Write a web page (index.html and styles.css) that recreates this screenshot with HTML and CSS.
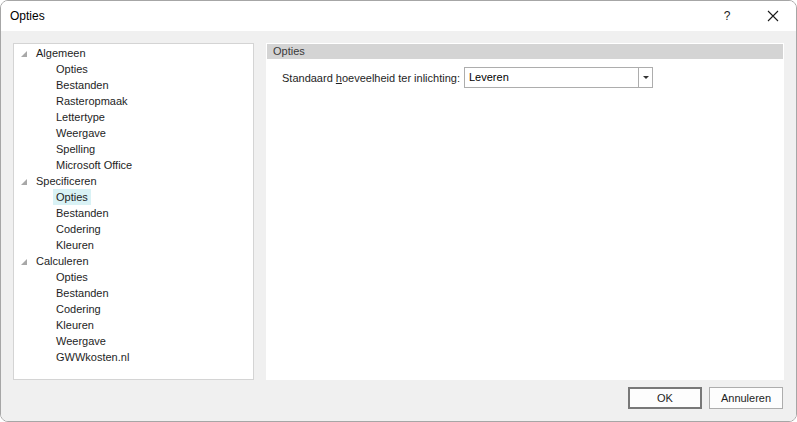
FILE: index.html
```html
<!DOCTYPE html>
<html>
<head>
<meta charset="utf-8">
<link rel="stylesheet" href="styles.css">
</head>
<body>
<div class="window">
  <div class="titlebar">
    <span class="title">Opties</span>
    <span class="tb-help">?</span>
    <span class="tb-close"><svg width="12" height="12" viewBox="0 0 12 12"><path d="M1 1 L11 11 M11 1 L1 11" stroke="#1a1a1a" stroke-width="1.1" fill="none"/></svg></span>
  </div>
  <div class="content">
    <div class="main">
      <div class="tree">
        <div class="node"><span class="tw"><svg width="6" height="6" viewBox="0 0 6 6"><polygon points="6,0 6,6 0,6" fill="#a8a8a8"/></svg></span><span class="lbl">Algemeen</span></div>
        <div class="leaf"><span class="lbl">Opties</span></div>
        <div class="leaf"><span class="lbl">Bestanden</span></div>
        <div class="leaf"><span class="lbl">Rasteropmaak</span></div>
        <div class="leaf"><span class="lbl">Lettertype</span></div>
        <div class="leaf"><span class="lbl">Weergave</span></div>
        <div class="leaf"><span class="lbl">Spelling</span></div>
        <div class="leaf"><span class="lbl">Microsoft Office</span></div>
        <div class="node"><span class="tw"><svg width="6" height="6" viewBox="0 0 6 6"><polygon points="6,0 6,6 0,6" fill="#a8a8a8"/></svg></span><span class="lbl">Specificeren</span></div>
        <div class="leaf"><span class="lbl sel">Opties</span></div>
        <div class="leaf"><span class="lbl">Bestanden</span></div>
        <div class="leaf"><span class="lbl">Codering</span></div>
        <div class="leaf"><span class="lbl">Kleuren</span></div>
        <div class="node"><span class="tw"><svg width="6" height="6" viewBox="0 0 6 6"><polygon points="6,0 6,6 0,6" fill="#a8a8a8"/></svg></span><span class="lbl">Calculeren</span></div>
        <div class="leaf"><span class="lbl">Opties</span></div>
        <div class="leaf"><span class="lbl">Bestanden</span></div>
        <div class="leaf"><span class="lbl">Codering</span></div>
        <div class="leaf"><span class="lbl">Kleuren</span></div>
        <div class="leaf"><span class="lbl">Weergave</span></div>
        <div class="leaf"><span class="lbl">GWWkosten.nl</span></div>
      </div>
      <div class="panel">
        <div class="panel-head">Opties</div>
        <div class="field">
          <span class="field-label">Standaard <u>h</u>oeveelheid ter inlichting:</span>
          <div class="combo">
            <span class="combo-text">Leveren</span>
            <span class="combo-btn"><svg width="6" height="4" viewBox="0 0 6 4"><polygon points="0,0 6,0 3,3" fill="#333"/></svg></span>
          </div>
        </div>
      </div>
    </div>
    <div class="footer">
      <button class="btn default">OK</button>
      <button class="btn">Annuleren</button>
    </div>
  </div>
</div>
</body>
</html>
```
FILE: styles.css
```css
html, body {
  margin: 0;
  padding: 0;
  background: #ffffff;
}
.window {
  width: 797px;
  height: 422px;
  box-sizing: border-box;
  border: 1px solid #a6a6a6;
  border-radius: 8px;
  overflow: hidden;
  display: flex;
  flex-direction: column;
  font-family: "Liberation Sans", Arial, sans-serif;
  font-size: 11px;
  color: #1e1e1e;
}
.titlebar {
  height: 30px;
  flex: none;
  background: #ffffff;
  display: flex;
  align-items: center;
  padding-left: 9px;
}
.title {
  font-size: 12px;
  color: #000;
  flex: 1;
}
.tb-help {
  font-size: 12px;
  color: #1a1a1a;
  width: 46px;
  text-align: center;
}
.tb-close {
  width: 46px;
  display: flex;
  justify-content: center;
  align-items: center;
}
.content {
  flex: 1;
  background: #f0f0f0;
  padding: 12px 12px 0 12px;
  display: flex;
  flex-direction: column;
}
.main {
  height: 337px;
  display: grid;
  grid-template-columns: 241px 1fr;
  gap: 12px;
}
.tree {
  background: #ffffff;
  border: 1px solid #d4d4d4;
  padding-top: 1px;
}
.node, .leaf {
  height: 16px;
  display: flex;
  align-items: center;
}
.node {
  padding-left: 7px;
}
.tw {
  width: 12px;
  display: flex;
  align-items: center;
  padding-top: 2px;
}
.leaf {
  padding-left: 39px;
}
.lbl {
  padding: 0 3px;
  line-height: 16px;
}
.sel {
  background: #d9f2f5;
}
.panel {
  background: #ffffff;
  padding: 1px;
}
.panel-head {
  background: #d4d4d4;
  height: 15px;
  line-height: 15px;
  padding-left: 6px;
  color: #3a3a3a;
}
.field {
  display: flex;
  align-items: center;
  margin-top: 8px;
  padding-left: 15px;
}
.field-label {
  width: 182px;
}
.combo {
  width: 189px;
  height: 21px;
  box-sizing: border-box;
  border: 1px solid #adadad;
  display: flex;
  align-items: stretch;
}
.combo-text {
  flex: 1;
  line-height: 19px;
  padding-left: 4px;
  color: #000;
}
.combo-btn {
  width: 13px;
  border-left: 1px solid #adadad;
  display: flex;
  align-items: center;
  justify-content: center;
}
.footer {
  display: flex;
  justify-content: flex-end;
  gap: 7px;
  padding-top: 7px;
  padding-right: 1px;
}
.btn {
  width: 74px;
  height: 22px;
  box-sizing: border-box;
  background: #fdfdfd;
  border: 1px solid #adadad;
  font-family: "Liberation Sans", Arial, sans-serif;
  font-size: 11px;
  color: #1e1e1e;
  padding: 0;
}
.btn.default {
  border: 2px solid #787878;
}
```
